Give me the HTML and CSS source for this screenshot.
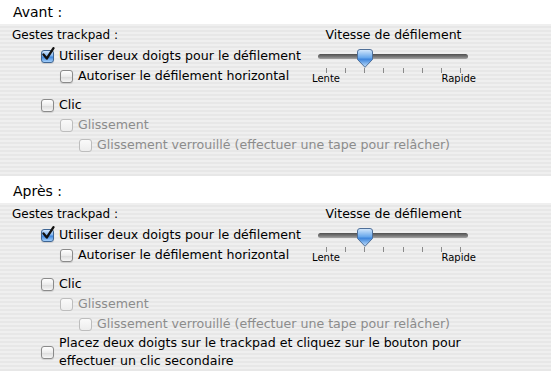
FILE: index.html
```html
<!DOCTYPE html>
<html lang="fr">
<head>
  <meta charset="UTF-8" />
  <title>Gestes trackpad</title>
  <link rel="stylesheet" href="styles.css">
</head>
<body>

  <!-- Avant -->
  <div class="caption">Avant :</div>
  <div class="panel panel-before">
    <div class="col-left">
      <div class="panel-title">Gestes trackpad :</div>
      <div class="group">
        <div class="opt lvl0"><span class="box on"><svg class="tick" width="15" height="15" viewBox="0 0 15 15"><path d="M2.5 7.5 L5.8 11.5 L12.5 1.2" /></svg></span>Utiliser deux doigts pour le défilement</div>
        <div class="opt lvl1"><span class="box"></span>Autoriser le défilement horizontal</div>
      </div>
      <div class="group group-click">
        <div class="opt lvl0"><span class="box"></span>Clic</div>
        <div class="opt lvl1 off"><span class="box"></span>Glissement</div>
        <div class="opt lvl2 off"><span class="box"></span>Glissement verrouillé (effectuer une tape pour relâcher)</div>
      </div>
    </div>
    <div class="col-right">
      <div class="panel-title center">Vitesse de défilement</div>
      <div class="slider">
        <div class="track"></div>
        <svg class="knob" width="16" height="19" viewBox="0 0 16 19">
          <defs>
            <linearGradient id="kg1" x1="0" y1="0" x2="0" y2="1">
              <stop offset="0" stop-color="#d6e9fc" />
              <stop offset="0.45" stop-color="#6aa9ec" />
              <stop offset="0.55" stop-color="#3f86dc" />
              <stop offset="1" stop-color="#c4e1fb" />
            </linearGradient>
          </defs>
          <path d="M3 0.5 H13 Q15.5 0.5 15.5 3 V10.5 L8 18.3 L0.5 10.5 V3 Q0.5 0.5 3 0.5 Z" fill="url(#kg1)" stroke="#4f6f98" />
        </svg>
      </div>
      <div class="ticks">
        <span></span><span></span><span></span><span></span><span></span><span></span><span></span><span></span>
      </div>
      <div class="scale"><span>Lente</span><span>Rapide</span></div>
    </div>
  </div>

  <!-- Après -->
  <div class="caption caption-after">Après :</div>
  <div class="panel panel-after">
    <div class="col-left">
      <div class="panel-title">Gestes trackpad :</div>
      <div class="group">
        <div class="opt lvl0"><span class="box on"><svg class="tick" width="15" height="15" viewBox="0 0 15 15"><path d="M2.5 7.5 L5.8 11.5 L12.5 1.2" /></svg></span>Utiliser deux doigts pour le défilement</div>
        <div class="opt lvl1"><span class="box"></span>Autoriser le défilement horizontal</div>
      </div>
      <div class="group group-click">
        <div class="opt lvl0"><span class="box"></span>Clic</div>
        <div class="opt lvl1 off"><span class="box"></span>Glissement</div>
        <div class="opt lvl2 off"><span class="box"></span>Glissement verrouillé (effectuer une tape pour relâcher)</div>
      </div>
      <div class="opt opt-wrap lvl0"><span class="box"></span>Placez deux doigts sur le trackpad et cliquez sur le bouton pour<br>effectuer un clic secondaire</div>
    </div>
    <div class="col-right">
      <div class="panel-title center">Vitesse de défilement</div>
      <div class="slider">
        <div class="track"></div>
        <svg class="knob" width="16" height="19" viewBox="0 0 16 19">
          <defs>
            <linearGradient id="kg2" x1="0" y1="0" x2="0" y2="1">
              <stop offset="0" stop-color="#d6e9fc" />
              <stop offset="0.45" stop-color="#6aa9ec" />
              <stop offset="0.55" stop-color="#3f86dc" />
              <stop offset="1" stop-color="#c4e1fb" />
            </linearGradient>
          </defs>
          <path d="M3 0.5 H13 Q15.5 0.5 15.5 3 V10.5 L8 18.3 L0.5 10.5 V3 Q0.5 0.5 3 0.5 Z" fill="url(#kg2)" stroke="#4f6f98" />
        </svg>
      </div>
      <div class="ticks">
        <span></span><span></span><span></span><span></span><span></span><span></span><span></span><span></span>
      </div>
      <div class="scale"><span>Lente</span><span>Rapide</span></div>
    </div>
  </div>

</body>
</html>
```

FILE: styles.css
```css
/* ===== page ===== */
body {
  margin: 0;
  font-family: "DejaVu Sans", "Liberation Sans", sans-serif;
  font-size: 12px;
  color: #000;
  background-color: #fff;
  overflow: hidden;
}

/* ===== bandes blanches : Avant / Après ===== */
.caption {
  padding: 2px 0 2px 13px;
  line-height: 20px;
  font-size: 14px;
}

.caption-after {
  padding-top: 5px;
  padding-bottom: 2px;
}

/* ===== panneau rayé ===== */
.panel {
  display: grid;
  grid-template-columns: 311px 165px;
  align-items: start;
  padding-top: 1px;
  overflow: hidden;
  background: repeating-linear-gradient(to bottom, #efefef 0, #efefef 2px, #e7e7e7 2px, #e7e7e7 4px);
}

.panel-before {
  height: 151px;
}

.panel-after {
  height: 168px;
}

.panel-title {
  line-height: 20px;
  padding-left: 12px;
  white-space: nowrap;
}

.panel-title.center {
  padding-left: 0;
  text-align: center;
  font-size: 12.5px;
}

/* ===== options ===== */
.group {
  margin-top: 1px;
}

.group-click {
  margin-top: 9px;
}

.opt {
  display: flex;
  align-items: center;
  gap: 5px;
  font-size: 12.6px;
  line-height: 20px;
  white-space: nowrap;
}

.opt.lvl0 { padding-left: 41px; }
.opt.lvl1 { padding-left: 60px; }
.opt.lvl2 { padding-left: 79px; }

.opt.off {
  color: #8c8c8c;
}

.opt-wrap {
  line-height: 18px;
}

/* ===== cases à cocher ===== */
.box {
  position: relative;
  flex: none;
  width: 11px;
  height: 11px;
  border: 1px solid #8a8a8a;
  border-radius: 3px;
  background: linear-gradient(#ffffff, #ececec 50%, #dcdcdc 55%, #f6f6f6);
  box-shadow: 0 1px 1px rgba(0, 0, 0, 0.12);
}

.box.on {
  border-color: #3f6593;
  background: linear-gradient(#cfe4fb, #7fb4f0 45%, #3e86df 55%, #a5d0fa);
}

.opt.off .box {
  border-color: #bdbdbd;
  background: linear-gradient(#fafafa, #ededed);
  box-shadow: none;
}

.tick {
  position: absolute;
  left: -1px;
  top: -4px;
}

.tick path {
  fill: none;
  stroke: #111;
  stroke-width: 2.3;
  stroke-linecap: round;
  stroke-linejoin: round;
}

/* ===== curseur de vitesse ===== */
.slider {
  position: relative;
  height: 20px;
  margin-top: 1px;
  display: flex;
  align-items: center;
}

.track {
  flex: 1;
  height: 5px;
  margin: 0 8px 0 7px;
  border-radius: 3px;
  background: linear-gradient(#4f4f4f, #7d7d7d 60%, #a5a5a5);
}

.knob {
  position: absolute;
  left: 46px;
  top: 3px;
}

.ticks {
  display: flex;
  justify-content: space-between;
  margin: 2px 15px 0 15px;
  height: 5px;
}

.ticks span {
  width: 1px;
  height: 5px;
  background-color: #8a8a8a;
}

.scale {
  display: flex;
  justify-content: space-between;
  font-size: 10px;
  line-height: 12px;
  padding: 0 0 0 1px;
}
```
